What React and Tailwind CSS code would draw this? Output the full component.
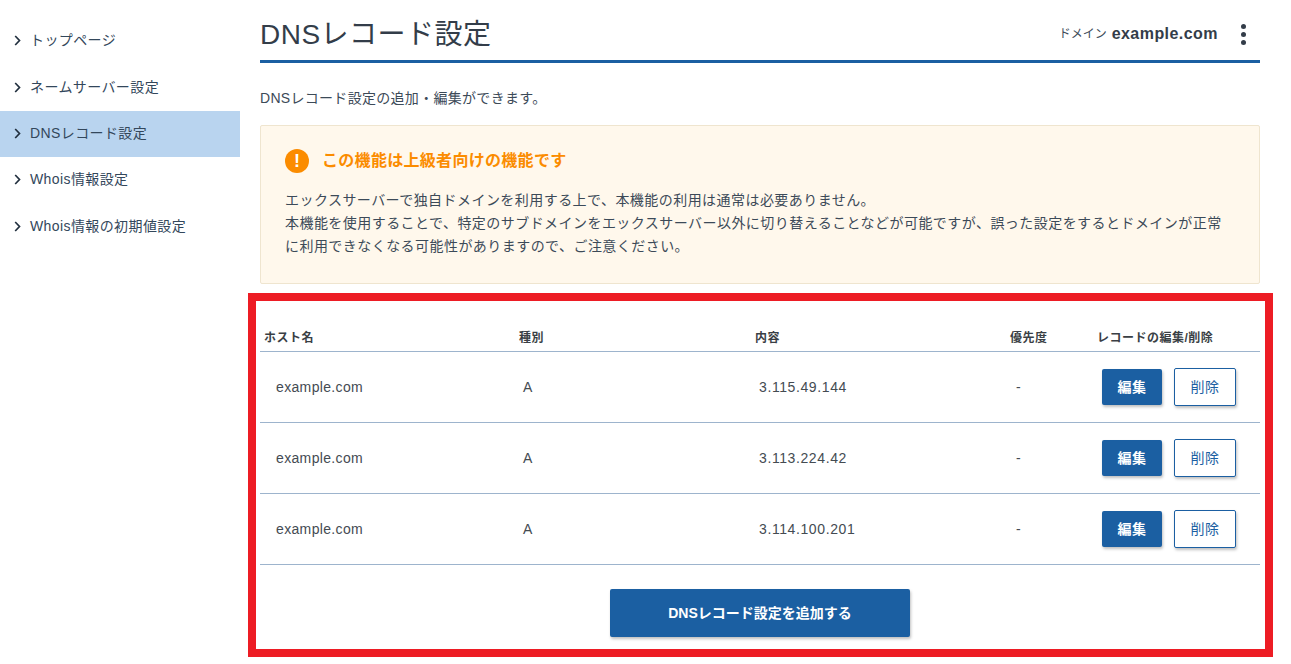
const FONT = "font-['Liberation_Sans','Noto_Sans_CJK_JP',sans-serif]";

const NAV_ITEMS = [
  { label: 'トップページ', cls: 'h-[47px]' },
  { label: 'ネームサーバー設定', cls: 'h-[47px]' },
  { label: 'DNSレコード設定', cls: 'h-[46px] pb-[1px] bg-[#b9d4ef]' },
  { label: 'Whois情報設定', cls: 'h-[46px] pb-[1px]' },
  { label: 'Whois情報の初期値設定', cls: 'h-[47px]' },
];

const RECORDS = [
  { host: 'example.com', type: 'A', content: '3.115.49.144', priority: '-' },
  { host: 'example.com', type: 'A', content: '3.113.224.42', priority: '-' },
  { host: 'example.com', type: 'A', content: '3.114.100.201', priority: '-' },
];

const Sidebar = () => (
  <nav className="w-[240px] shrink-0 pt-[17px]">
    {NAV_ITEMS.map(item => (
      <div key={item.label} className={`flex items-center pl-[14px] gap-[9px] ${item.cls}`}>
        <svg width="7" height="11" viewBox="0 0 7 11" fill="none" stroke="#22303f" strokeWidth="1.7">
          <path d="M1.2 1l4.3 4.5-4.3 4.5" />
        </svg>
        <span className="text-[14px] tracking-[0.4px] text-[#33475b]">{item.label}</span>
      </div>
    ))}
  </nav>
);

const Notice = () => (
  <div className="mt-[17px] h-[159px] bg-[#fff8ec] border border-[#efe5cf] rounded-[2px] pl-[24px] pr-[24px] pt-[23px]">
    <div className="flex items-center gap-[13px] h-[24px]">
      <span className="flex items-center justify-center w-[24px] h-[24px] rounded-full bg-[#fb8c00] text-white text-[18px] font-bold leading-none">!</span>
      <h2 className="text-[16px] font-bold tracking-[0.3px] text-[#fb8c00]">この機能は上級者向けの機能です</h2>
    </div>
    <p className="mt-[16px] text-[14px] leading-[23px] tracking-[0.45px] text-[#3c4a58]">
      エックスサーバーで独自ドメインを利用する上で、本機能の利用は通常は必要ありません。<br />
      本機能を使用することで、特定のサブドメインをエックスサーバー以外に切り替えることなどが可能ですが、誤った設定をするとドメインが正常<br />
      に利用できなくなる可能性がありますので、ご注意ください。
    </p>
  </div>
);

const RecordTable = () => (
  <section className="mt-[9px] -ml-[12px] -mr-[13px] h-[364px] border-8 border-[#ed1c24] pl-[4px] pr-[5px] pt-[16px]">
    <table className="w-[1000px] table-fixed border-collapse text-left">
      <colgroup>
        <col className="w-[255px]" />
        <col className="w-[236px]" />
        <col className="w-[255px]" />
        <col className="w-[87px]" />
        <col className="w-[167px]" />
      </colgroup>
      <thead>
        <tr className="h-[34px] border-b border-[#9db4cd] text-[12px] tracking-[0.5px] text-[#3a3f45]">
          <th className="pl-[4px] pt-[8px] font-bold">ホスト名</th>
          <th className="pl-[4px] pt-[8px] font-bold">種別</th>
          <th className="pl-[4px] pt-[8px] font-bold">内容</th>
          <th className="pl-[4px] pt-[8px] font-bold">優先度</th>
          <th className="pl-[4px] pt-[8px] font-bold">レコードの編集/削除</th>
        </tr>
      </thead>
      <tbody>
        {RECORDS.map(r => (
          <tr key={r.content} className="h-[71px] border-b border-[#9db4cd] text-[14px] tracking-[0.6px] text-[#444b52]">
            <td className="pl-[16px] pt-[2px] tracking-[0.35px]">{r.host}</td>
            <td className="pl-[8px] pt-[2px]">{r.type}</td>
            <td className="pl-[8px] pt-[2px]">{r.content}</td>
            <td className="pl-[10px] pt-[2px]">{r.priority}</td>
            <td className="pl-[9px]">
              <div className="flex items-center gap-[12px]">
                <button className="w-[60px] h-[36px] pt-[2px] bg-[#1b5fa2] rounded-[2px] text-white text-[14px] font-bold shadow-[1px_2px_3px_rgba(0,0,0,0.25)]">編集</button>
                <button className="w-[62px] h-[38px] pt-[2px] bg-white border border-[#1b5fa2] rounded-[2px] text-[#1b5fa2] text-[14px] shadow-[1px_2px_3px_rgba(0,0,0,0.25)]">削除</button>
              </div>
            </td>
          </tr>
        ))}
      </tbody>
    </table>
    <div className="flex justify-center mt-[24px]">
      <button className="w-[300px] h-[48px] pt-[2px] bg-[#1b5fa2] rounded-[2px] text-white text-[14px] font-bold shadow-[1px_2px_3px_rgba(0,0,0,0.25)]">
        DNSレコード設定を追加する
      </button>
    </div>
  </section>
);

const App = () => (
  <div className={`${FONT} flex h-[664px] w-[1291px] overflow-hidden bg-white`}>
    <Sidebar />
    <main className="w-[1000px] ml-[20px]">
      <header className="flex items-center justify-between h-[63px] border-b-[3px] border-[#1b5fa2] pt-[8px]">
        <h1 className="pt-[2px] text-[28px] tracking-[0.5px] text-[#333d49]">DNSレコード設定</h1>
        <div className="flex items-center">
          <span className="text-[12px] text-[#3c4a58]">ドメイン</span>
          <span className="ml-[5px] text-[16px] font-bold tracking-[0.45px] text-[#333d49]">example.com</span>
          <span className="ml-[23px] mr-[14px] flex flex-col gap-[3px]">
            <i className="block w-[5px] h-[5px] rounded-full bg-[#333d49]" />
            <i className="block w-[5px] h-[5px] rounded-full bg-[#333d49]" />
            <i className="block w-[5px] h-[5px] rounded-full bg-[#333d49]" />
          </span>
        </div>
      </header>
      <p className="mt-[25px] text-[14px] leading-[20px] tracking-[0.3px] text-[#3c4a58]">DNSレコード設定の追加・編集ができます。</p>
      <Notice />
      <RecordTable />
    </main>
  </div>
);

export default App;
